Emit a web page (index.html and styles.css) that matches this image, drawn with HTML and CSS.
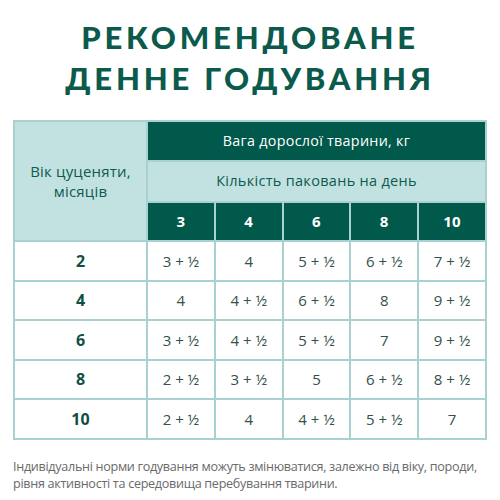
FILE: index.html
```
<!DOCTYPE html>
<html lang="uk">
<head>
<meta charset="utf-8">
<link rel="stylesheet" href="styles.css">
</head>
<body>
<div class="page">
  <h1 class="title">РЕКОМЕНДОВАНЕ<br>ДЕННЕ ГОДУВАННЯ</h1>
  <table class="feed">
    <tr class="h1">
      <td class="age-head" rowspan="3">Вік цуценяти,<br>місяців</td>
      <td class="dark" colspan="5">Вага дорослої тварини, кг</td>
    </tr>
    <tr class="h2">
      <td class="light" colspan="5">Кількість паковань на день</td>
    </tr>
    <tr class="h3">
      <td class="dark num">3</td>
      <td class="dark num">4</td>
      <td class="dark num">6</td>
      <td class="dark num">8</td>
      <td class="dark num">10</td>
    </tr>
    <tr><td class="age">2</td><td>3 + ½</td><td>4</td><td>5 + ½</td><td>6 + ½</td><td>7 + ½</td></tr>
    <tr><td class="age">4</td><td>4</td><td>4 + ½</td><td>6 + ½</td><td>8</td><td>9 + ½</td></tr>
    <tr><td class="age">6</td><td>3 + ½</td><td>4 + ½</td><td>5 + ½</td><td>7</td><td>9 + ½</td></tr>
    <tr><td class="age">8</td><td>2 + ½</td><td>3 + ½</td><td>5</td><td>6 + ½</td><td>8 + ½</td></tr>
    <tr><td class="age">10</td><td>2 + ½</td><td>4</td><td>4 + ½</td><td>5 + ½</td><td>7</td></tr>
  </table>
  <p class="note">Індивідуальні норми годування можуть змінюватися, залежно від віку, породи,<br>рівня активності та середовища перебування тварини.</p>
</div>
</body>
</html>
```
FILE: styles.css
```
html, body {
  margin: 0;
  padding: 0;
  background: #ffffff;
}
.page {
  width: 500px;
  height: 500px;
  padding: 0 13px;
  box-sizing: border-box;
  font-family: "Open Sans", "Noto Sans", sans-serif;
}
.title {
  margin: 0;
  padding-top: 17px;
  height: 120px;
  box-sizing: border-box;
  text-align: center;
  font-family: Lato, "Noto Sans", sans-serif;
  font-weight: 900;
  font-size: 31px;
  line-height: 41px;
  letter-spacing: 3.8px;
  color: #0b5a4b;
}
.feed {
  width: 474px;
  border-collapse: collapse;
  table-layout: fixed;
  border: 2px solid #a9d1d1;
}
.feed td {
  border: 2px solid #a9d1d1;
  text-align: center;
  vertical-align: middle;
  padding: 0;
  height: 37.5px;
  font-size: 15px;
  line-height: 20px;
  color: #34504a;
}
.feed td.age-head {
  width: 131px;
  background: #c2e2e2;
  color: #0f5a4c;
  font-size: 15px;
  line-height: 20px;
  letter-spacing: 0.2px;
}
.feed td.dark {
  background: #00594a;
  color: #ffffff;
  font-size: 14.3px;
  letter-spacing: 0.3px;
}
.feed td.light {
  background: #c2e2e2;
  color: #0f5a4c;
  font-size: 14.5px;
  letter-spacing: 0.3px;
  height: 39px;
}
.feed td.num {
  font-weight: 700;
  font-size: 15px;
}
.feed td.age {
  font-weight: 700;
  font-size: 16px;
  color: #0f4f44;
}
.note {
  margin: 18px 0 0;
  font-size: 12.6px;
  line-height: 17px;
  letter-spacing: -0.3px;
  white-space: nowrap;
  color: #6a6a6a;
}
```
